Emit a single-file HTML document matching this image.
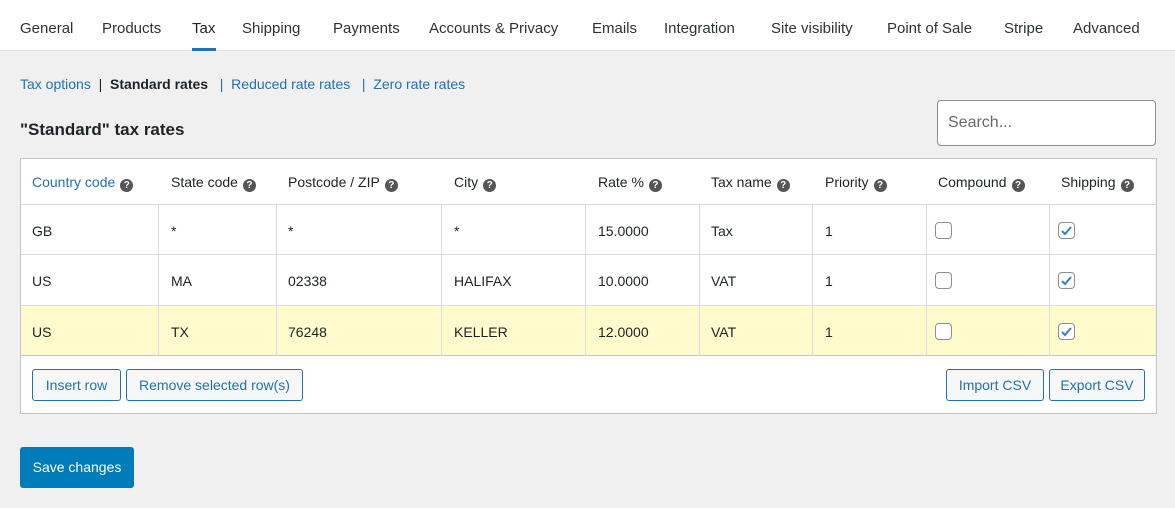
<!DOCTYPE html><html><head><style>
*{margin:0;padding:0;box-sizing:border-box}
body{width:1175px;height:508px;background:#f0f0f1;font-family:"Liberation Sans",sans-serif;color:#1d2327;position:relative;overflow:hidden;font-size:14px}
.a{position:absolute;white-space:nowrap}
.tabs{position:absolute;left:0;top:0;width:1175px;height:51px;background:#fff;border-bottom:1px solid #e0e0e0}
.tab{position:absolute;top:20px;font-size:15px;color:#2c3338}
.blue{color:#2271b1}
.h{display:inline-block;width:13px;height:13px;border-radius:50%;background:#555;color:#fff;font-size:10px;font-weight:bold;text-align:center;line-height:13px;vertical-align:-1px;margin-left:5px}
.tbl{position:absolute;left:20px;top:158px;width:1137px;height:256px;background:#fff;border:1px solid #c3c4c7}
.row{position:absolute;left:0;width:1135px;height:50px;border-top:1px solid #dcdcde}
.vl{position:absolute;top:46px;width:1px;height:151px;background:#dcdcde}
.cb{position:absolute;width:17px;height:17px;border:1px solid #8c8f94;border-radius:4px;background:#fff}
.btn{position:absolute;height:32px;border:1px solid #2271b1;border-radius:3px;background:#f6f7f7;color:#2271b1;font-size:14px;line-height:30px;text-align:center}
</style></head><body>
<div class="tabs">
<span class="tab" style="left:20px">General</span>
<span class="tab" style="left:102px">Products</span>
<span class="tab" style="left:192px;color:#1d2327">Tax</span>
<div class="a" style="left:192px;top:48px;width:24px;height:3px;background:#2271b1"></div>
<span class="tab" style="left:242px">Shipping</span>
<span class="tab" style="left:333px">Payments</span>
<span class="tab" style="left:429px">Accounts &amp; Privacy</span>
<span class="tab" style="left:592px">Emails</span>
<span class="tab" style="left:664px">Integration</span>
<span class="tab" style="left:771px">Site visibility</span>
<span class="tab" style="left:887px">Point of Sale</span>
<span class="tab" style="left:1004px">Stripe</span>
<span class="tab" style="left:1073px">Advanced</span>
</div>
<div class="a" style="left:20px;top:76px;font-size:14px"><span class="blue">Tax options</span> &nbsp;| &nbsp;<b>Standard rates</b> &nbsp; <span class="blue">| &nbsp;Reduced rate rates</span> &nbsp; <span class="blue">| &nbsp;Zero rate rates</span></div>
<div class="a" style="left:20px;top:120px;font-size:17px;font-weight:bold">"Standard" tax rates</div>
<div class="a" style="left:937px;top:100px;width:219px;height:46px;background:#fff;border:1px solid #8c8f94;border-radius:4px;padding:14px 10px;font-size:16px;color:#646970;line-height:16px">Search...</div>
<div class="tbl">
<div class="a" style="top:15px;left:11px"><span class="blue">Country code</span><span class="h">?</span></div>
<div class="a" style="top:15px;left:150px">State code<span class="h">?</span></div>
<div class="a" style="top:15px;left:267px">Postcode / ZIP<span class="h">?</span></div>
<div class="a" style="top:15px;left:433px">City<span class="h">?</span></div>
<div class="a" style="top:15px;left:577px">Rate %<span class="h">?</span></div>
<div class="a" style="top:15px;left:690px">Tax name<span class="h">?</span></div>
<div class="a" style="top:15px;left:804px">Priority<span class="h">?</span></div>
<div class="a" style="top:15px;left:917px">Compound<span class="h">?</span></div>
<div class="a" style="top:15px;left:1040px">Shipping<span class="h">?</span></div>
<div class="row" style="top:45px"></div>
<div class="row" style="top:95px"></div>
<div class="row" style="top:146px;background:#fffbcc"></div>
<div class="row" style="top:196px;border-color:#c3c4c7"></div>
<div class="vl" style="left:137px"></div><div class="vl" style="left:255px"></div><div class="vl" style="left:420px"></div><div class="vl" style="left:564px"></div><div class="vl" style="left:678px"></div><div class="vl" style="left:791px"></div><div class="vl" style="left:905px"></div><div class="vl" style="left:1028px"></div>
<div class="a" style="top:64px;left:11px">GB</div><div class="a" style="top:64px;left:150px">*</div><div class="a" style="top:64px;left:267px">*</div><div class="a" style="top:64px;left:433px">*</div><div class="a" style="top:64px;left:577px">15.0000</div><div class="a" style="top:64px;left:690px">Tax</div><div class="a" style="top:64px;left:804px">1</div>
<div class="a" style="top:114px;left:11px">US</div><div class="a" style="top:114px;left:150px">MA</div><div class="a" style="top:114px;left:267px">02338</div><div class="a" style="top:114px;left:433px">HALIFAX</div><div class="a" style="top:114px;left:577px">10.0000</div><div class="a" style="top:114px;left:690px">VAT</div><div class="a" style="top:114px;left:804px">1</div>
<div class="a" style="top:165px;left:11px">US</div><div class="a" style="top:165px;left:150px">TX</div><div class="a" style="top:165px;left:267px">76248</div><div class="a" style="top:165px;left:433px">KELLER</div><div class="a" style="top:165px;left:577px">12.0000</div><div class="a" style="top:165px;left:690px">VAT</div><div class="a" style="top:165px;left:804px">1</div>
<div class="cb" style="left:914px;top:63px"></div><div class="cb" style="left:914px;top:113px"></div><div class="cb" style="left:914px;top:164px"></div>
<div class="cb" style="left:1037px;top:63px"><svg width="15" height="15" viewBox="0 0 15 15"><path d="M3 8l3 3 6-7" stroke="#3582c4" stroke-width="2" fill="none"/></svg></div>
<div class="cb" style="left:1037px;top:113px"><svg width="15" height="15" viewBox="0 0 15 15"><path d="M3 8l3 3 6-7" stroke="#3582c4" stroke-width="2" fill="none"/></svg></div>
<div class="cb" style="left:1037px;top:164px"><svg width="15" height="15" viewBox="0 0 15 15"><path d="M3 8l3 3 6-7" stroke="#3582c4" stroke-width="2" fill="none"/></svg></div>
<div class="btn" style="left:11px;top:210px;width:89px">Insert row</div>
<div class="btn" style="left:105px;top:210px;width:177px">Remove selected row(s)</div>
<div class="btn" style="left:925px;top:210px;width:98px">Import CSV</div>
<div class="btn" style="left:1028px;top:210px;width:96px">Export CSV</div>
</div>
<div class="a" style="left:20px;top:447px;width:114px;height:41px;background:#007cba;border-radius:3px;color:#fff;font-size:14px;line-height:41px;text-align:center">Save changes</div>
</body></html>
